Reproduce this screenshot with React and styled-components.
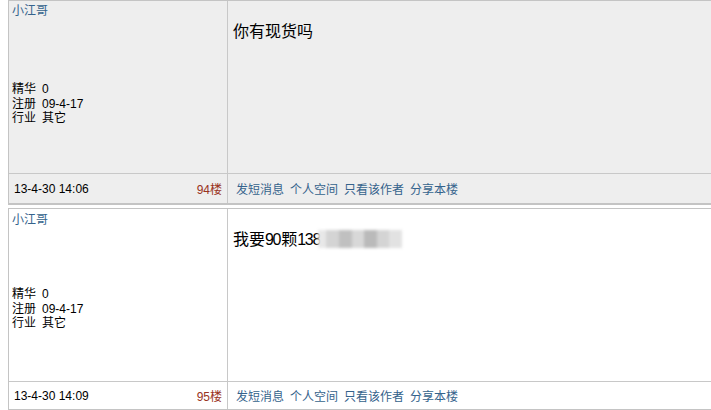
import React from 'react'
import styled, { createGlobalStyle } from 'styled-components'

const GlobalStyle = createGlobalStyle`
  body {
    margin: 0;
    background: #fff;
    font-family: "Liberation Sans", "Noto Sans CJK SC", sans-serif;
    font-size: 12px;
    color: #000;
  }
`

const Page = styled.div`
  padding-left: 8px;
  width: 760px;
`

const Post = styled.div`
  background: ${p => (p.shaded ? '#eeeeee' : '#ffffff')};
  border-top: 1px solid #c4c4c4;
  border-left: 1px solid #c4c4c4;
  border-bottom: ${p => (p.last ? '1px' : '2px')} solid #c4c4c4;
  margin-bottom: 3px;
`

const Row = styled.div`
  display: grid;
  grid-template-columns: 219px 1fr;
  height: ${p => p.height}px;
  border-top: ${p => (p.footer ? '1px solid #c8c8c8' : 'none')};
`

const Side = styled.div`
  border-right: 1px solid #c8c8c8;
  padding: ${p => p.top}px 0 0 3px;
  display: flex;
  flex-direction: column;
`

const Author = styled.a`
  color: #35638c;
  line-height: 15px;
  height: ${p => p.gap}px;
`

const Info = styled.div`
  line-height: 14.5px;
  span { margin-right: 6px; }
`

const Content = styled.div`
  padding: 21px 0 0 5px;
  font-size: 16px;
  line-height: 20px;
`

const Num = styled.span`
  letter-spacing: -1.3px;
  margin-right: 1px;
`

const Blur = styled.span`
  display: inline-block;
  width: 84px;
  height: 18px;
  vertical-align: -3px;
  background: linear-gradient(90deg, #e8e8e8 0 10%, #d4d4d4 10% 25%, #c0c0c0 25% 40%, #d8d8d8 40% 55%, #bababa 55% 70%, #d4d4d4 70% 85%, #e2e2e2 85% 100%);
  filter: blur(1.5px);
  margin-left: -3px;
`

const FootSide = styled.div`
  border-right: 1px solid #c8c8c8;
  display: flex;
  align-items: center;
  justify-content: space-between;
  padding: 0 5px;
`

const Floor = styled.span`
  color: #993322;
`

const Links = styled.div`
  display: flex;
  align-items: center;
  padding-left: 8px;
  gap: 6px;
  a { color: #35638c; }
`

const posts = [
  { time: '13-4-30 14:06', floor: '94', shaded: true, text: '你有现货吗' },
  { time: '13-4-30 14:09', floor: '95', shaded: false, text: '我要', num: '90', tail: '颗', num2: '138' },
]

export default function App() {
  return (
    <Page>
      <GlobalStyle />
      {posts.map((p, i) => (
        <Post key={p.floor} shaded={p.shaded} last={i === posts.length - 1}>
          <Row height={172}>
            <Side top={p.shaded ? 3 : 4}>
              <Author gap={p.shaded ? 78 : 74}>小江哥</Author>
              <Info>
                <div><span>精华</span>0</div>
                <div><span>注册</span>09-4-17</div>
                <div><span>行业</span>其它</div>
              </Info>
            </Side>
            <Content>
              {p.text}
              {p.num && <Num>{p.num}</Num>}
              {p.tail}
              {p.num2 && <Num>{p.num2}</Num>}
              {p.num2 && <Blur />}
            </Content>
          </Row>
          <Row footer height={p.shaded ? 29 : 27}>
            <FootSide>
              <span>{p.time}</span>
              <Floor>{p.floor}楼</Floor>
            </FootSide>
            <Links>
              <a>发短消息</a>
              <a>个人空间</a>
              <a>只看该作者</a>
              <a>分享本楼</a>
            </Links>
          </Row>
        </Post>
      ))}
    </Page>
  )
}
